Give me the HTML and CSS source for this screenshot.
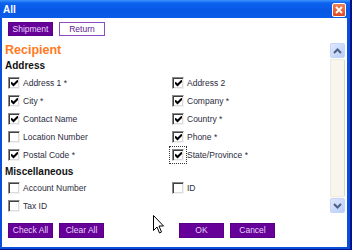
FILE: index.html
```html
<!DOCTYPE html>
<html>
<head>
<meta charset="utf-8">
<link rel="stylesheet" href="styles.css">
</head>
<body>
<div class="window">
  <div class="titlebar">
    <span class="title">All</span>
    <span class="close"><svg width="8" height="8" viewBox="0 0 8 8"><path d="M1 1L7 7M7 1L1 7" stroke="#fff" stroke-width="1.8"/></svg></span>
  </div>
  <div class="client">
    <div class="tabs">
      <button class="btn">Shipment</button>
      <button class="btn outline">Return</button>
    </div>
    <div class="pane">
      <div class="content">
        <div class="h-recip">Recipient</div>
        <div class="h-group">Address</div>
        <div class="grid">
          <label class="item"><span class="cb"><svg class="ck" viewBox="0 0 7 7"><path d="M0 2.5L2.5 5L7 0.5" fill="none" stroke="#000" stroke-width="2"/></svg></span>Address 1 *</label>
          <label class="item"><span class="cb"><svg class="ck" viewBox="0 0 7 7"><path d="M0 2.5L2.5 5L7 0.5" fill="none" stroke="#000" stroke-width="2"/></svg></span>Address 2</label>
          <label class="item"><span class="cb"><svg class="ck" viewBox="0 0 7 7"><path d="M0 2.5L2.5 5L7 0.5" fill="none" stroke="#000" stroke-width="2"/></svg></span>City *</label>
          <label class="item"><span class="cb"><svg class="ck" viewBox="0 0 7 7"><path d="M0 2.5L2.5 5L7 0.5" fill="none" stroke="#000" stroke-width="2"/></svg></span>Company *</label>
          <label class="item"><span class="cb"><svg class="ck" viewBox="0 0 7 7"><path d="M0 2.5L2.5 5L7 0.5" fill="none" stroke="#000" stroke-width="2"/></svg></span>Contact Name</label>
          <label class="item"><span class="cb"><svg class="ck" viewBox="0 0 7 7"><path d="M0 2.5L2.5 5L7 0.5" fill="none" stroke="#000" stroke-width="2"/></svg></span>Country *</label>
          <label class="item"><span class="cb"></span>Location Number</label>
          <label class="item"><span class="cb"><svg class="ck" viewBox="0 0 7 7"><path d="M0 2.5L2.5 5L7 0.5" fill="none" stroke="#000" stroke-width="2"/></svg></span>Phone *</label>
          <label class="item"><span class="cb"><svg class="ck" viewBox="0 0 7 7"><path d="M0 2.5L2.5 5L7 0.5" fill="none" stroke="#000" stroke-width="2"/></svg></span>Postal Code *</label>
          <label class="item"><span class="cb focus"><svg class="ck" viewBox="0 0 7 7"><path d="M0 2.5L2.5 5L7 0.5" fill="none" stroke="#000" stroke-width="2"/></svg></span>State/Province *</label>
        </div>
        <div class="h-group misc">Miscellaneous</div>
        <div class="grid">
          <label class="item"><span class="cb"></span>Account Number</label>
          <label class="item"><span class="cb"></span>ID</label>
          <label class="item"><span class="cb"></span>Tax ID</label>
        </div>
      </div>
      <div class="scrollbar">
        <div class="sb-btn"><svg width="9" height="6" viewBox="0 0 9 6"><path d="M1 5L4.5 1.5L8 5" fill="none" stroke="#4d6185" stroke-width="2"/></svg></div>
        <div class="sb-track"><div class="sb-thumb"></div></div>
        <div class="sb-btn"><svg width="9" height="6" viewBox="0 0 9 6"><path d="M1 1L4.5 4.5L8 1" fill="none" stroke="#4d6185" stroke-width="2"/></svg></div>
      </div>
    </div>
    <div class="footer">
      <div class="group">
        <button class="btn">Check All</button>
        <button class="btn">Clear All</button>
      </div>
      <div class="group">
        <button class="btn">OK</button>
        <button class="btn">Cancel</button>
      </div>
    </div>
    <svg class="cursor" width="12" height="19" viewBox="0 0 12 19"><path d="M0.5 0.5V15.5L4 12L6.5 18L8.5 17L6 11H10.5Z" fill="#fff" stroke="#000" stroke-width="1" stroke-linejoin="miter"/></svg>
  </div>
</div>
</body>
</html>
```

FILE: styles.css
```css
* { box-sizing: border-box; }
html, body { margin: 0; padding: 0; background: #fff; }
body { font-family: "Liberation Sans", Arial, sans-serif; }

.window {
  width: 352px;
  height: 250px;
  display: flex;
  flex-direction: column;
  background: #0a4fdc;
  border-right: 2px solid #00128a;
  border-bottom: 1px solid #00128a;
}

.titlebar {
  height: 18px;
  flex: none;
  display: flex;
  align-items: center;
  justify-content: space-between;
  padding: 0 4px 0 3px;
  background: linear-gradient(#3f94ff 0, #0c62ee 3px, #0857e6 10px, #0a5ce8 100%);
}
.title {
  color: #fff;
  font-weight: bold;
  font-size: 10px;
  padding-top: 1px;
}
.close {
  width: 14px;
  height: 14px;
  display: flex;
  align-items: center;
  justify-content: center;
  background: linear-gradient(#f08456, #dc4a26);
  border: 1px solid #fff;
  border-radius: 2px;
  margin-top: 2px;
}

.client {
  flex: 1;
  margin: 0 3px 2px 2px;
  background: #fff;
  display: flex;
  flex-direction: column;
  position: relative;
}

.tabs {
  display: flex;
  gap: 6px;
  padding: 4px 0 0 6px;
  height: 25px;
  flex: none;
}

.btn {
  width: 45px;
  height: 15px;
  padding: 0;
  margin: 0;
  font-family: "Liberation Sans", Arial, sans-serif;
  font-size: 8.5px;
  color: #e4d6f4;
  background: #660099;
  border: 1px solid #5a0088;
  line-height: 13px;
  text-align: center;
}
.tabs .btn { height: 14px; line-height: 12px; }
.btn.outline {
  background: #fff;
  color: #5c1a90;
  border: 1.5px solid #8a4cc0;
  width: 46px;
}

.pane {
  height: 170px;
  flex: none;
  display: flex;
}
.content {
  flex: 1;
  overflow: hidden;
  padding-left: 3px;
}
.h-recip {
  height: 14px;
  font-size: 12.5px;
  font-weight: bold;
  color: #ff7a1e;
  line-height: 14px;
}
.h-group {
  height: 17px;
  font-size: 10px;
  font-weight: bold;
  color: #111;
  line-height: 17px;
}
.h-group.misc { height: 13px; line-height: 11px; margin-top: 2px; }

.grid {
  display: grid;
  grid-template-columns: 164px 1fr;
  padding-left: 3px;
}
.item {
  height: 18px;
  display: flex;
  align-items: center;
  gap: 3px;
  font-size: 8.5px;
  color: #2c2c40;
}
.cb {
  width: 12px;
  height: 12px;
  flex: none;
  background: #fff;
  border: 1px solid;
  border-color: #8a8a8a #f2f2f2 #f2f2f2 #8a8a8a;
  box-shadow: inset 1px 1px 0 #404040, inset -1px -1px 0 #dcdcdc;
  display: flex;
  align-items: center;
  justify-content: center;
}
.ck {
  width: 7px;
  height: 7px;
  display: block;
  margin: 1px 0 0 1px;
}
.cb.focus {
  outline: 1px dotted #333;
  outline-offset: 2px;
}

.scrollbar {
  width: 15px;
  margin-right: 2px;
  display: flex;
  flex-direction: column;
  flex: none;
}
.sb-btn {
  height: 15px;
  flex: none;
  display: flex;
  align-items: center;
  justify-content: center;
  background: linear-gradient(135deg, #dfe8fd, #b9cdf8);
  border: 1px solid #c3d3fb;
  border-radius: 2px;
}
.sb-track {
  flex: 1;
  background: #fbfaf4;
  padding: 1px 0;
}
.sb-thumb {
  height: 100%;
  background: #f7f5ec;
  border: 1px solid #eeece2;
  border-right-color: #d8d6cc;
  border-radius: 2px;
}

.footer {
  display: grid;
  grid-template-columns: 171px auto;
  padding: 10px 0 0 6px;
}
.group {
  display: flex;
  gap: 6px;
}

.cursor {
  position: absolute;
  left: 151px;
  top: 197px;
}
```
